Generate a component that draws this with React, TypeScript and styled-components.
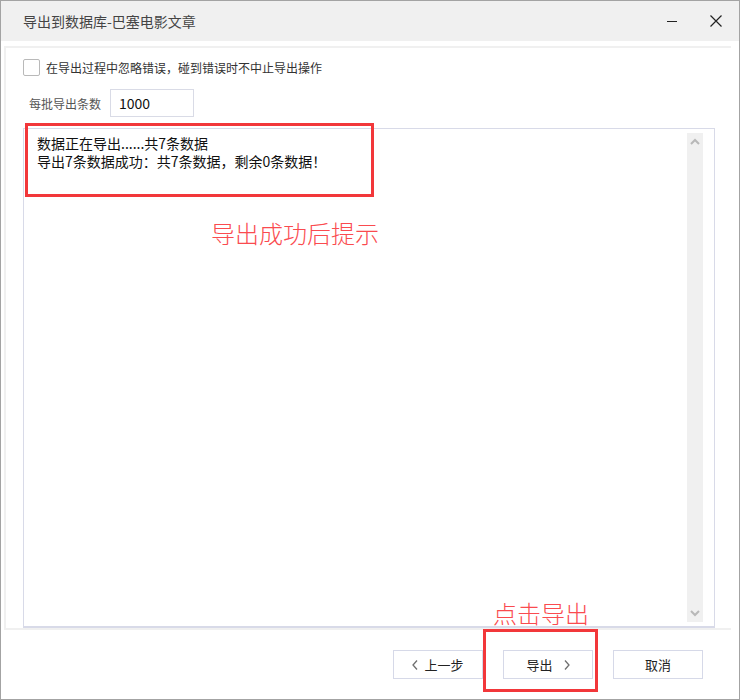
import React from "react";
import styled, { createGlobalStyle } from "styled-components";

const Global = createGlobalStyle`
  html, body { margin: 0; padding: 0; background: #ffffff; }
  body { font-family: "Noto Sans CJK SC", "Noto Sans", "Liberation Sans", sans-serif; }
  * { box-sizing: border-box; }
`;

const Window = styled.div`
  position: relative;
  width: 740px;
  height: 700px;
  border: 1px solid #a3a3a3;
  background: #ffffff;
  display: flex;
  flex-direction: column;
`;

const TitleBar = styled.div`
  height: 40px;
  flex: none;
  background: #f0f0f0;
  display: flex;
  align-items: center;
  padding-left: 22px;
`;

const Title = styled.div`
  flex: 1;
  font-size: 14px;
  color: #444444;
`;

const WinButton = styled.button`
  width: 44px;
  height: 40px;
  border: none;
  background: transparent;
  padding: 0;
  display: flex;
  align-items: center;
  justify-content: center;
  cursor: pointer;
`;

const Body = styled.div`
  flex: 1;
  display: flex;
  flex-direction: column;
  padding: 5px 0 0 3px;
`;

const Panel = styled.div`
  width: 727px;
  height: 584px;
  border: 2px solid #f0f0f0;
  border-right: none;
  display: flex;
  flex-direction: column;
  padding: 11px 0 0 17px;
`;

const CheckRow = styled.label`
  display: flex;
  align-items: center;
  gap: 6px;
  height: 17px;
  font-size: 12px;
  color: #333333;
`;

const Check = styled.span`
  width: 17px;
  height: 17px;
  border: 1px solid #b9b9b9;
  border-radius: 2px;
  background: #fff;
  flex: none;
`;

const BatchRow = styled.div`
  display: flex;
  align-items: center;
  margin-top: 13px;
  padding-left: 6px;
  height: 28px;
`;

const BatchLabel = styled.span`
  font-size: 12px;
  color: #555555;
  width: 81px;
`;

const NumberBox = styled.div`
  width: 84px;
  height: 28px;
  border: 1px solid #d9dbe6;
  display: flex;
  align-items: center;
  padding-left: 8px;
  font-size: 14px;
  color: #111111;
`;

const LogBox = styled.div`
  margin-top: 11px;
  width: 692px;
  flex: 1;
  border: 1px solid #d8dae8;
  border-bottom-width: 2px;
  display: flex;
  padding: 4px 11px 4px 13px;
`;

const LogText = styled.div`
  flex: 1;
  padding-top: 1px;
  font-size: 14px;
  line-height: 18px;
  color: #111111;
`;

const ScrollBar = styled.div`
  width: 16px;
  background: #f0f0f0;
  display: flex;
  flex-direction: column;
  justify-content: space-between;
  align-items: center;
  padding: 5px 0;
`;

const Footer = styled.div`
  display: flex;
  justify-content: flex-end;
  gap: 20px;
  padding: 20px 36px 0 0;
`;

const Btn = styled.button<{ $gap?: number }>`
  width: 90px;
  height: 29px;
  border: 1px solid #d6d9e8;
  background: #ffffff;
  font-family: inherit;
  font-size: 13px;
  color: #222222;
  display: flex;
  align-items: center;
  justify-content: center;
  gap: ${(p) => p.$gap ?? 6}px;
  padding: 0;
`;

const RedBox = styled.div<{ $l: number; $t: number; $w: number; $h: number }>`
  position: absolute;
  left: ${(p) => p.$l}px;
  top: ${(p) => p.$t}px;
  width: ${(p) => p.$w}px;
  height: ${(p) => p.$h}px;
  border: 3px solid #f2373a;
  pointer-events: none;
`;

const RedNote = styled.div<{ $l: number; $t: number }>`
  position: absolute;
  left: ${(p) => p.$l}px;
  top: ${(p) => p.$t}px;
  font-size: 24px;
  line-height: 30px;
  font-weight: 300;
  color: #fa4b4f;
  white-space: nowrap;
  pointer-events: none;
`;

const Chevron = ({ dir, color = "#6f6f6f" }: { dir: "left" | "right" | "up" | "down"; color?: string }) => {
  if (dir === "left" || dir === "right") {
    const d = dir === "left" ? "M5 0.5 L1 5 L5 9.5" : "M1 0.5 L5 5 L1 9.5";
    return (
      <svg width="6" height="10" viewBox="0 0 6 10">
        <path d={d} fill="none" stroke={color} strokeWidth="1.3" />
      </svg>
    );
  }
  const d = dir === "up" ? "M1 6 L5 2 L9 6" : "M1 2 L5 6 L9 2";
  return (
    <svg width="10" height="8" viewBox="0 0 10 8">
      <path d={d} fill="none" stroke={color} strokeWidth="2" />
    </svg>
  );
};

export default function App() {
  return (
    <>
      <Global />
      <Window>
        <TitleBar>
          <Title>导出到数据库-巴塞电影文章</Title>
          <WinButton aria-label="minimize">
            <svg width="10" height="10" viewBox="0 0 10 10">
              <path d="M0 5.5 H10" stroke="#222" strokeWidth="1" />
            </svg>
          </WinButton>
          <WinButton aria-label="close" style={{ marginRight: 1 }}>
            <svg width="12" height="12" viewBox="0 0 12 12">
              <path d="M0.5 0.5 L11.5 11.5 M11.5 0.5 L0.5 11.5" stroke="#222" strokeWidth="1.2" />
            </svg>
          </WinButton>
        </TitleBar>
        <Body>
          <Panel>
            <CheckRow>
              <Check />
              在导出过程中忽略错误，碰到错误时不中止导出操作
            </CheckRow>
            <BatchRow>
              <BatchLabel>每批导出条数</BatchLabel>
              <NumberBox>1000</NumberBox>
            </BatchRow>
            <LogBox>
              <LogText>
                <div>数据正在导出......共7条数据</div>
                <div>导出7条数据成功：共7条数据，剩余0条数据！</div>
              </LogText>
              <ScrollBar>
                <Chevron dir="up" color="#b8b8b8" />
                <Chevron dir="down" color="#b8b8b8" />
              </ScrollBar>
            </LogBox>
          </Panel>
          <Footer>
            <Btn>
              <Chevron dir="left" />
              上一步
            </Btn>
            <Btn $gap={11}>
              导出
              <Chevron dir="right" />
            </Btn>
            <Btn>取消</Btn>
          </Footer>
        </Body>
        <RedBox $l={24} $t={122} $w={349} $h={74} />
        <RedNote $l={210} $t={217}>导出成功后提示</RedNote>
        <RedNote $l={492} $t={597}>点击导出</RedNote>
        <RedBox $l={482} $t={628} $w={115} $h={63} />
      </Window>
    </>
  );
}
